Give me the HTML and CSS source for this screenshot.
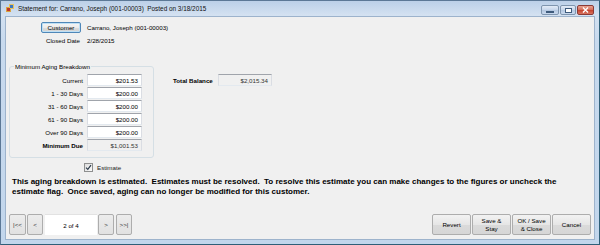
FILE: index.html
```html
<!DOCTYPE html>
<html lang="en">
  <head>
    <meta charset="UTF-8" />
    <title>Statement</title>
    <link rel="stylesheet" href="styles.css">
  </head>
  <body>
    <div class="window">
      <div class="titlebar">
        <svg class="app-icon" width="9" height="9" viewBox="0 0 9 9">
          <rect x="0" y="3" width="5" height="5" fill="#d9a441" />
          <rect x="3" y="0" width="5" height="5" fill="#e8c15a" />
          <rect x="1" y="4" width="3" height="3" fill="#c0392b" />
          <rect x="4" y="1" width="3" height="3" fill="#3a78c2" />
        </svg>
        <span class="title">Statement for: Carrano, Joseph (001-00003)  Posted on 3/18/2015</span>
        <div class="controls">
          <span class="ctl min"><i></i></span>
          <span class="ctl max"><i></i></span>
          <span class="ctl close">
            <svg width="7" height="6" viewBox="0 0 7 6">
              <path d="M1 0.5 L6 5.5 M6 0.5 L1 5.5" stroke="#fff" stroke-width="1.4" />
            </svg>
          </span>
        </div>
      </div>

      <div class="client">
        <div class="top">
          <button class="btn customer">Customer</button>
          <span class="value">Carrano, Joseph (001-00003)</span>
          <span class="label">Closed Date</span>
          <span class="value">2/28/2015</span>
        </div>

        <div class="middle">
          <fieldset class="aging">
            <legend>Minimum Aging Breakdown</legend>
            <div class="aging-grid">
              <span class="label">Current</span>
              <span class="box">$201.53</span>
              <span class="label">1 - 30 Days</span>
              <span class="box">$200.00</span>
              <span class="label">31 - 60 Days</span>
              <span class="box">$200.00</span>
              <span class="label">61 - 90 Days</span>
              <span class="box">$200.00</span>
              <span class="label">Over 90 Days</span>
              <span class="box">$200.00</span>
              <span class="label strong">Minimum Due</span>
              <span class="box readonly">$1,001.53</span>
            </div>
          </fieldset>
          <div class="total">
            <span class="label strong">Total Balance</span>
            <span class="box readonly wide">$2,015.34</span>
          </div>
        </div>

        <div class="estimate">
          <span class="check">
            <svg width="7" height="7" viewBox="0 0 7 7">
              <path d="M1 3.6 L2.8 5.4 L6 1.2" fill="none" stroke="#2b3a4a" stroke-width="1.2" />
            </svg>
          </span>
          <span>Estimate</span>
        </div>

        <p class="message">This aging breakdown is estimated.&nbsp; Estimates must be resolved.&nbsp; To resolve this estimate you can make changes to the figures or uncheck the estimate flag.&nbsp; Once saved, aging can no longer be modified for this customer.</p>

        <div class="footer">
          <div class="nav">
            <button class="btn nav-btn first">|&lt;&lt;</button>
            <button class="btn nav-btn">&lt;</button>
            <span class="page">2 of 4</span>
            <button class="btn nav-btn">&gt;</button>
            <button class="btn nav-btn last">&gt;&gt;|</button>
          </div>
          <div class="actions">
            <button class="btn action">Revert</button>
            <button class="btn action">Save &amp;<br>Stay</button>
            <button class="btn action">OK / Save<br>&amp; Close</button>
            <button class="btn action">Cancel</button>
          </div>
        </div>
      </div>
    </div>
  </body>
</html>
```

FILE: styles.css
```css
html,
body {
  width: 100%;
  height: 100%;
  padding: 0;
  margin: 0;
  background-color: #fff;
}

.window {
  box-sizing: border-box;
  width: 600px;
  height: 245px;
  display: flex;
  flex-direction: column;
  background: linear-gradient(#bcd0e8, #d3e1f1 14px, #c8daee 40px, #c2d6ec);
  border: 1px solid #5c7896;
  border-right-color: #2f5f78;
  border-bottom-color: #2f5f78;
  font-family: "Liberation Sans", Arial, sans-serif;
  font-size: 6.2px;
  color: #000;
}

/* title bar */
.titlebar {
  height: 15px;
  display: flex;
  align-items: center;
  padding: 0 5px 0 5px;
}

.app-icon {
  margin-right: 3px;
}

.title {
  white-space: pre;
  font-size: 6.4px;
  color: #111;
}

.controls {
  margin-left: auto;
  display: flex;
  gap: 1px;
  align-self: flex-start;
  margin-top: 4px;
}

.ctl {
  box-sizing: border-box;
  height: 10px;
  display: flex;
  align-items: center;
  justify-content: center;
  border: 1px solid #7f95ae;
  border-radius: 2px;
  background: linear-gradient(#e3ecf7, #c5d5ea 50%, #b3c7e0 51%, #c9d9ee);
}

.min {
  width: 18px;
}

.min i {
  display: block;
  width: 6px;
  height: 0;
  margin-top: 3px;
  background: #fff;
  border: 1px solid #3e5b7c;
}

.max {
  width: 16px;
}

.max i {
  display: block;
  width: 5px;
  height: 3px;
  border: 1px solid #3e5b7c;
  background: #fff;
}

.close {
  width: 17px;
  border-color: #8a3a36;
  background: linear-gradient(#e8a493, #d46a55 50%, #c4402c 51%, #d9735e);
}

/* client area */
.client {
  flex: 1;
  margin: 0 4px 4px 4px;
  background: #f0f0f0;
  border: 1px solid #9db3cc;
  display: flex;
  flex-direction: column;
  padding: 5px 3px 4px 3px;
}

.label {
  white-space: nowrap;
}

.strong {
  font-weight: bold;
}

.top {
  display: grid;
  grid-template-columns: 40px auto;
  column-gap: 6px;
  row-gap: 4px;
  align-items: center;
  justify-items: start;
  padding-left: 32px;
}

.top .label {
  justify-self: end;
  margin-right: 1px;
}

.btn {
  box-sizing: border-box;
  font-family: inherit;
  font-size: 6.2px;
  color: #000;
  padding: 0;
  border: 1px solid #8e8f8f;
  border-radius: 2px;
  background: linear-gradient(#f6f6f6, #ebebeb 50%, #dddddd 51%, #d0d0d0);
  line-height: 1.15;
}

.customer {
  width: 40px;
  height: 11px;
  border-color: #4f87b8;
  box-shadow: inset 0 0 0 1px #bfe0f5;
}

.middle {
  display: flex;
  align-items: flex-start;
  margin-top: 19px;
}

.aging {
  width: 145px;
  box-sizing: border-box;
  margin: 0;
  padding: 4px 10px 6px 0;
  border: 1px solid #d5dfe5;
  border-radius: 3px;
}

.aging legend {
  padding: 0 1px;
  margin-left: 4px;
  font-size: 6.2px;
}

.aging-grid {
  display: grid;
  grid-template-columns: 73px 55px;
  column-gap: 4px;
  row-gap: 1px;
  align-items: center;
}

.aging-grid .label {
  text-align: right;
}

.box {
  box-sizing: border-box;
  height: 12px;
  display: flex;
  align-items: center;
  justify-content: flex-end;
  padding-right: 3px;
  background: #fff;
  border: 1px solid #abadb3;
  border-top-color: #a0a4ab;
  border-left-color: #dadde3;
  border-right-color: #dadde3;
  border-bottom-color: #e3e9ef;
}

.box.readonly {
  background: #f0f0f0;
  color: #333;
}

.total {
  display: flex;
  align-items: center;
  gap: 4px;
  margin-left: 19px;
  margin-top: 11px;
}

.total .label {
  width: 41px;
}

.box.wide {
  width: 54px;
}

.estimate {
  display: flex;
  align-items: center;
  gap: 4px;
  margin: 5px 0 0 75px;
  color: #222;
}

.check {
  box-sizing: border-box;
  width: 9px;
  height: 9px;
  display: flex;
  align-items: center;
  justify-content: center;
  border: 1px solid #8e8f8f;
  background: linear-gradient(135deg, #dcdcdc, #fbfbfb);
}

.message {
  margin: 5px 0 0 3px;
  width: 560px;
  font-weight: bold;
  font-size: 8px;
  line-height: 9.5px;
}

.footer {
  margin-top: auto;
  display: flex;
  justify-content: space-between;
  align-items: flex-end;
}

.nav {
  display: flex;
  align-items: stretch;
  height: 21px;
}

.nav-btn {
  width: 16px;
  height: 21px;
  margin-right: 2px;
  border-color: #adadad;
  background: linear-gradient(#ececec, #e1e1e1);
  color: #333;
}

.nav-btn.first {
  width: 17px;
  margin-right: 1px;
}

.page {
  width: 52px;
  margin-right: 1px;
  display: flex;
  align-items: center;
  justify-content: center;
  background: #fff;
  border-top: 1px solid #e2e2e2;
  box-sizing: border-box;
}

.actions {
  display: flex;
  gap: 1px;
}

.action {
  width: 39px;
  height: 21px;
  border-color: #adadad;
  background: linear-gradient(#f2f2f2, #e6e6e6 50%, #dadada 51%, #d6d6d6);
}
```
